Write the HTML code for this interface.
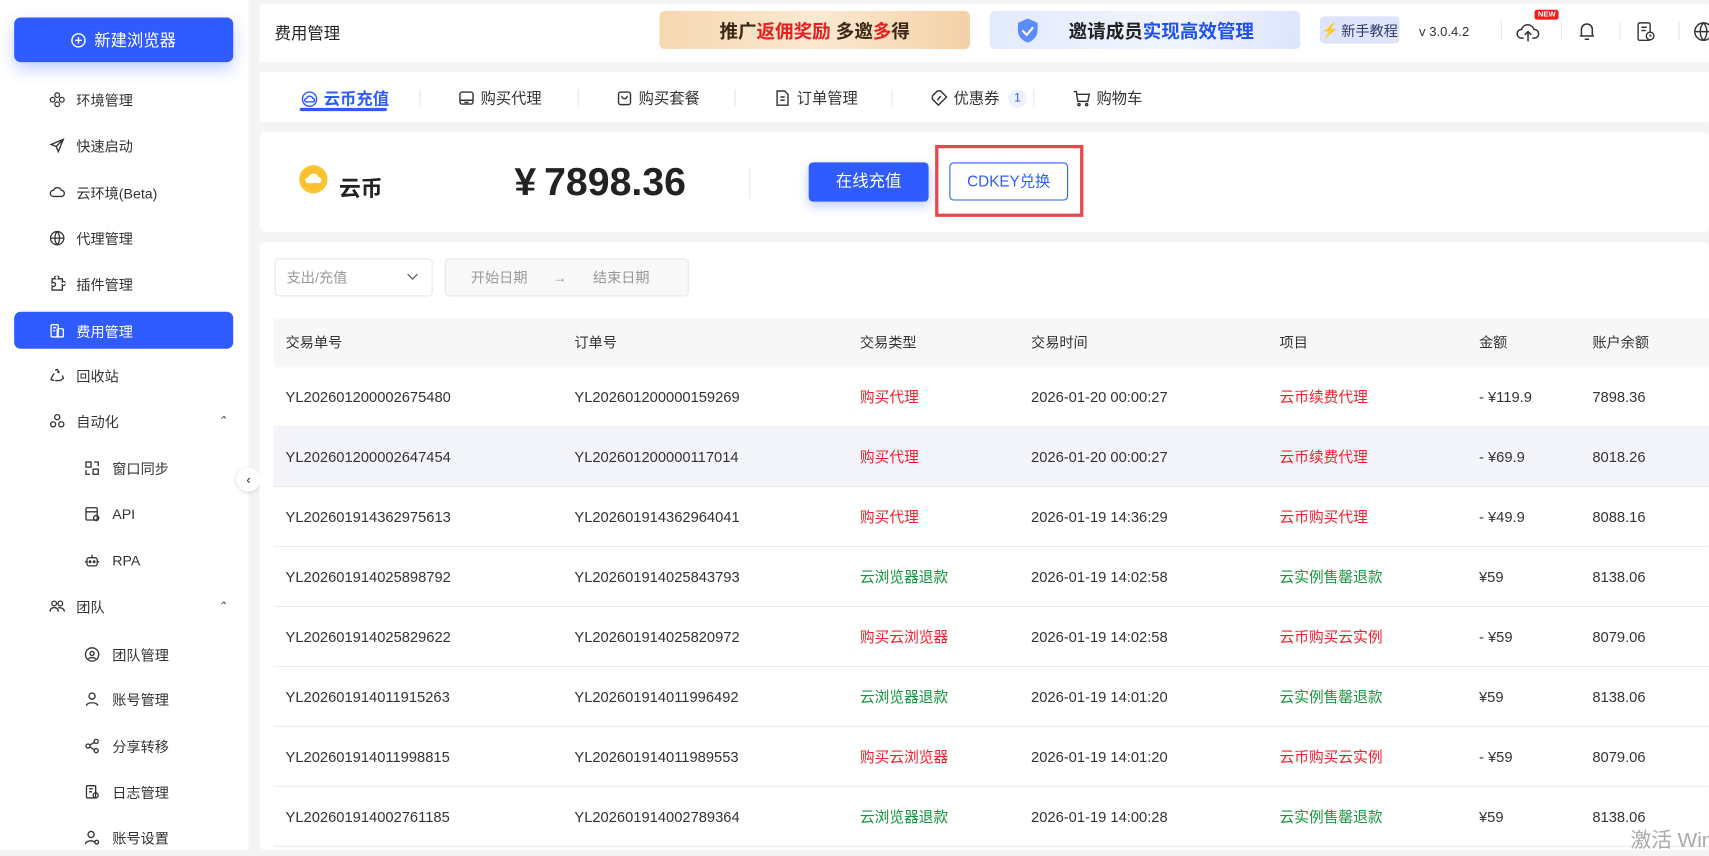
<!DOCTYPE html>
<html><head><meta charset="utf-8">
<style>
*{box-sizing:border-box;margin:0;padding:0}
html,body{width:1709px;height:850px;overflow:hidden;background:#f4f4f5}
body{font-family:"Liberation Sans","Noto Sans CJK SC",sans-serif;color:#333}
#s{position:absolute;left:0;top:0;width:1568px;height:780px;transform:scale(1.0899);transform-origin:0 0;background:#f4f4f5}
.abs{position:absolute}
.side{left:0;top:0;width:228px;height:780px;background:#fff}
.newb{left:13px;top:16px;width:201px;height:41px;background:#2f5bff;border-radius:6px;color:#fff;font-size:15px;display:flex;align-items:center;justify-content:center;box-shadow:0 6px 14px rgba(47,91,255,.3)}
.mi{position:absolute;left:13px;width:201px;height:34px;display:flex;align-items:center;font-size:13px;color:#333;border-radius:6px}
.mi svg{position:absolute;left:32px;width:15px;height:15px}
.mi span{position:absolute;left:57px}
.mi.sub svg{left:64px}
.mi.sub span{left:90px}
.mi.act{background:#2f5bff;color:#fff}
.car{position:absolute;right:6px;font-size:10px;color:#333}
.top{left:238px;top:4px;width:1330px;height:53px;background:#fff}
.tabs{left:238px;top:66px;width:1330px;height:46px;background:#fff}
.tab{position:absolute;top:14px;font-size:14px;color:#333;display:flex;align-items:center;gap:5px}
.sep{position:absolute;top:16px;width:1px;height:16px;background:#e5e5e5}
.card{left:238px;top:121px;width:1330px;height:92px;background:#fff;border-radius:6px}
.tbl{left:238px;top:222px;width:1330px;height:558px;background:#fff;border-radius:6px}
.row{position:absolute;left:251px;width:1317px;height:55px;border-bottom:1px solid #ececec;font-size:13.5px;color:#333}
.row div{position:absolute;top:0;line-height:55px;white-space:nowrap}
.r{color:#f0202a}.g{color:#14953b}
</style></head><body><div id="s">
<div class="abs side"></div>
<div class="abs newb"><svg width="14" height="14" viewBox="0 0 14 14" style="margin-right:7px"><circle cx="7" cy="7" r="6" fill="none" stroke="#fff" stroke-width="1.3"/><path d="M7 4v6M4 7h6" stroke="#fff" stroke-width="1.3"/></svg>新建浏览器</div>

<div class="mi" style="top:74px"><svg viewBox="0 0 16 16" fill="none" stroke="#333" stroke-width="1.2"><circle cx="8" cy="3.5" r="2.3"/><circle cx="8" cy="12.5" r="2.3"/><circle cx="3.5" cy="8" r="2.3"/><circle cx="12.5" cy="8" r="2.3"/></svg><span>环境管理</span></div>
<div class="mi" style="top:116px"><svg viewBox="0 0 16 16" fill="none" stroke="#333" stroke-width="1.3"><path d="M14 2L2 7l5 2 2 5z M7 9l7-7"/></svg><span>快速启动</span></div>
<div class="mi" style="top:159px"><svg viewBox="0 0 16 16" fill="none" stroke="#333" stroke-width="1.3"><path d="M4 12h8a3 3 0 0 0 0-6 4 4 0 0 0-7.5 0A3 3 0 0 0 4 12z"/></svg><span>云环境(Beta)</span></div>
<div class="mi" style="top:201px"><svg viewBox="0 0 16 16" fill="none" stroke="#333" stroke-width="1.3"><circle cx="8" cy="8" r="6.5"/><path d="M1.5 8h13M8 1.5c-3 3-3 10 0 13M8 1.5c3 3 3 10 0 13"/></svg><span>代理管理</span></div>
<div class="mi" style="top:243px"><svg viewBox="0 0 16 16" fill="none" stroke="#333" stroke-width="1.3"><path d="M3 14h10V9a2 2 0 1 0 0-3V3H9a2 2 0 1 0-3 0H3v4a2 2 0 1 1 0 3z"/></svg><span>插件管理</span></div>
<div class="mi act" style="top:286px"><svg viewBox="0 0 16 16" fill="none" stroke="#fff" stroke-width="1.3"><rect x="2" y="2" width="7" height="12" rx="1"/><rect x="8" y="6" width="6" height="8" rx="1"/><path d="M4 5h3M4 8h2"/></svg><span>费用管理</span></div>
<div class="mi" style="top:327px"><svg viewBox="0 0 16 16" fill="none" stroke="#333" stroke-width="1.3"><path d="M6 3l2-1 2 3M13 8l1 3-3 2M3 9l-1 3 3 1M10 5l-2 0M11 13H6M3 9l2-3"/></svg><span>回收站</span></div>
<div class="mi" style="top:369px"><svg viewBox="0 0 16 16" fill="none" stroke="#333" stroke-width="1.3"><circle cx="8" cy="4" r="2.5"/><circle cx="4" cy="11" r="2.5"/><circle cx="12" cy="11" r="2.5"/></svg><span>自动化</span><i class="car">⌃</i></div>
<div class="mi sub" style="top:412px"><svg viewBox="0 0 16 16" fill="none" stroke="#333" stroke-width="1.3"><rect x="2" y="2" width="5" height="5"/><rect x="9" y="9" width="5" height="5"/><path d="M10 2h4v4M2 10v4h4"/></svg><span>窗口同步</span></div>
<div class="mi sub" style="top:454px"><svg viewBox="0 0 16 16" fill="none" stroke="#333" stroke-width="1.3"><rect x="2" y="2" width="11" height="12" rx="1"/><path d="M2 6h11"/><circle cx="12" cy="12" r="2.5"/></svg><span>API</span></div>
<div class="mi sub" style="top:497px"><svg viewBox="0 0 16 16" fill="none" stroke="#333" stroke-width="1.3"><rect x="3" y="5" width="10" height="8" rx="2"/><path d="M8 2v3M1 9h2M13 9h2"/><circle cx="6" cy="9" r=".8"/><circle cx="10" cy="9" r=".8"/></svg><span>RPA</span></div>
<div class="mi" style="top:539px"><svg viewBox="0 0 16 16" fill="none" stroke="#333" stroke-width="1.3"><circle cx="5" cy="5" r="2.3"/><circle cx="11" cy="5" r="2.3"/><path d="M1 13c0-3 2-4 4-4s4 1 4 4M9 9c3 0 6 1 6 4"/></svg><span>团队</span><i class="car">⌃</i></div>
<div class="mi sub" style="top:583px"><svg viewBox="0 0 16 16" fill="none" stroke="#333" stroke-width="1.3"><circle cx="8" cy="8" r="6.5"/><circle cx="8" cy="7" r="2"/><path d="M4.5 12.5c1-2 6-2 7 0"/></svg><span>团队管理</span></div>
<div class="mi sub" style="top:624px"><svg viewBox="0 0 16 16" fill="none" stroke="#333" stroke-width="1.3"><circle cx="8" cy="5" r="3"/><path d="M2.5 14.5c0-4 11-4 11 0"/></svg><span>账号管理</span></div>
<div class="mi sub" style="top:667px"><svg viewBox="0 0 16 16" fill="none" stroke="#333" stroke-width="1.3"><circle cx="4" cy="8" r="2"/><circle cx="12" cy="3.5" r="2"/><circle cx="12" cy="12.5" r="2"/><path d="M6 7l4-2.5M6 9l4 2.5"/></svg><span>分享转移</span></div>
<div class="mi sub" style="top:709px"><svg viewBox="0 0 16 16" fill="none" stroke="#333" stroke-width="1.3"><rect x="2.5" y="2" width="9" height="12" rx="1"/><path d="M5 5h4M5 8h3"/><circle cx="11.5" cy="11.5" r="2.5"/></svg><span>日志管理</span></div>
<div class="mi sub" style="top:751px"><svg viewBox="0 0 16 16" fill="none" stroke="#333" stroke-width="1.3"><circle cx="7" cy="5" r="3"/><path d="M1.5 14.5c0-4 8-4 9-2"/><circle cx="12.5" cy="12.5" r="1.8"/></svg><span>账号设置</span></div>
<div class="abs" style="left:217px;top:429px;width:22px;height:22px;border-radius:50%;background:#fff;box-shadow:0 1px 4px rgba(0,0,0,.15);font-size:12px;line-height:22px;text-align:center;color:#333">‹</div>

<div class="abs top"></div>
<div class="abs" style="left:252px;top:20px;font-size:15px;color:#222">费用管理</div>
<div class="abs" style="left:605px;top:10px;width:285px;height:35px;border-radius:5px;background:linear-gradient(90deg,#f6d7b0,#fbe9d2 50%,#f4d1a6);font-size:17px;font-weight:bold;color:#3b2a1a;display:flex;align-items:center;justify-content:center">推广<span style="color:#e61f1f">返佣奖励</span>&nbsp;多邀<span style="color:#e61f1f">多</span>得</div>
<div class="abs" style="left:908px;top:10px;width:285px;height:35px;border-radius:5px;background:linear-gradient(100deg,#e2eafd,#f1f5ff 60%,#dbe5fc);font-size:17px;font-weight:bold;color:#222;display:flex;align-items:center;justify-content:center;padding-left:30px">邀请成员<span style="color:#2050f0">实现高效管理</span><svg class="abs" style="left:22px;top:6px" width="26" height="24" viewBox="0 0 26 24"><path d="M13 1l9 4v7c0 6-5 10-9 11-4-1-9-5-9-11V5z" fill="#5b8cff"/><path d="M8 12l4 4 6-7" stroke="#fff" stroke-width="2" fill="none"/></svg></div>
<div class="abs" style="left:1211px;top:15px;width:73px;height:25px;border-radius:4px;background:#dde4fb;font-size:13px;color:#2c3a66;display:flex;align-items:center;justify-content:center"><span style="color:#3a6cff;margin-right:2px">⚡</span>新手教程</div>
<div class="abs" style="left:1302px;top:22px;font-size:12px;color:#333">v 3.0.4.2</div>
<div class="abs" style="left:1377px;top:20px;width:1px;height:17px;background:#e5e5e5"></div>
<div class="abs" style="left:1432px;top:20px;width:1px;height:17px;background:#e5e5e5"></div>
<div class="abs" style="left:1486px;top:20px;width:1px;height:17px;background:#e5e5e5"></div>
<div class="abs" style="left:1540px;top:20px;width:1px;height:17px;background:#e5e5e5"></div>
<svg class="abs" style="left:1391px;top:20px" width="22" height="20" viewBox="0 0 22 20" fill="none" stroke="#333" stroke-width="1.4"><path d="M7 15H5a4 4 0 0 1 0-8 6 6 0 0 1 11.5 0A4 4 0 0 1 17 15h-2M11 18v-8M8 12l3-3 3 3"/></svg>
<div class="abs" style="left:1408px;top:9px;background:#f01c1c;color:#fff;font-size:7px;font-weight:bold;padding:1px 3px;border-radius:2px">NEW</div>
<svg class="abs" style="left:1447px;top:19px" width="18" height="20" viewBox="0 0 18 20" fill="none" stroke="#333" stroke-width="1.4"><path d="M4 14V8a5 5 0 0 1 10 0v6h1.5H2.5zM7 17h4"/></svg>
<svg class="abs" style="left:1500px;top:19px" width="20" height="20" viewBox="0 0 20 20" fill="none" stroke="#333" stroke-width="1.3"><rect x="3" y="2" width="11" height="16" rx="1.5"/><path d="M6 6h5M6 9h4"/><circle cx="14" cy="14" r="3.5" fill="#fff"/><path d="M14 12.5v1.5h1.2"/></svg>
<svg class="abs" style="left:1553px;top:19px" width="20" height="20" viewBox="0 0 20 20" fill="none" stroke="#333" stroke-width="1.3"><circle cx="10" cy="10" r="8"/><path d="M2 10h16M10 2c-4 4-4 12 0 16M10 2c4 4 4 12 0 16"/></svg>

<div class="abs tabs">
<div class="tab" style="left:38px;color:#2f5bff;font-weight:bold;font-size:15px"><svg width="16" height="16" viewBox="0 0 16 16" fill="none" stroke="#2f5bff" stroke-width="1.3"><circle cx="8" cy="8" r="6.5"/><path d="M5 10.5h6a1.6 1.6 0 0 0 0-3.2 3 3 0 0 0-5.7 0A1.6 1.6 0 0 0 5 10.5z"/></svg>云币充值</div>
<div class="abs" style="left:37px;top:33px;width:80px;height:3px;background:#2f5bff;border-radius:2px"></div>
<div class="sep" style="left:147px"></div>
<div class="tab" style="left:182px"><svg width="16" height="16" viewBox="0 0 16 16" fill="none" stroke="#333" stroke-width="1.3"><rect x="2" y="2.5" width="12" height="11" rx="2"/><path d="M2 10h12M6 12h4"/></svg>购买代理</div>
<div class="sep" style="left:292px"></div>
<div class="tab" style="left:327px"><svg width="16" height="16" viewBox="0 0 16 16" fill="none" stroke="#333" stroke-width="1.3"><rect x="2.5" y="2.5" width="11" height="11.5" rx="2"/><path d="M5.5 6a2.5 2.5 0 0 0 5 0"/></svg>购买套餐</div>
<div class="sep" style="left:436px"></div>
<div class="tab" style="left:472px"><svg width="16" height="16" viewBox="0 0 16 16" fill="none" stroke="#333" stroke-width="1.3"><path d="M3 1.5h7l3 3v10H3z"/><path d="M6 7h4M6 10h4"/></svg>订单管理</div>
<div class="sep" style="left:580px"></div>
<div class="tab" style="left:616px"><svg width="16" height="16" viewBox="0 0 16 16" fill="none" stroke="#333" stroke-width="1.3"><path d="M9 1.5L14.5 7 7 14.5 1.5 9V6l4.5-4.5z"/><path d="M6 10l3-4"/></svg>优惠券<span style="display:inline-block;width:17px;height:17px;border-radius:50%;background:#eef2ff;color:#2f5bff;font-size:11px;text-align:center;line-height:17px;margin-left:3px">1</span></div>
<div class="sep" style="left:710px"></div>
<div class="tab" style="left:746px"><svg width="17" height="16" viewBox="0 0 17 16" fill="none" stroke="#333" stroke-width="1.3"><path d="M1 2h2.5l1.5 9h9l1.5-6.5H4"/><circle cx="6" cy="14" r="1"/><circle cx="13" cy="14" r="1"/></svg>购物车</div>
</div>

<div class="abs card"></div>
<svg class="abs" style="left:274px;top:151px" width="27" height="27" viewBox="0 0 27 27"><circle cx="13.5" cy="13.5" r="13" fill="#f9c531"/><circle cx="13.5" cy="13.5" r="10.5" fill="#fbc02d"/><path d="M8.5 17h10a2.6 2.6 0 0 0 0-5.2 5 5 0 0 0-9.6 0A2.6 2.6 0 0 0 8.5 17z" fill="#fff"/></svg>
<div class="abs" style="left:311px;top:157px;font-size:20px;font-weight:bold;color:#222">云币</div>
<div class="abs" style="left:472px;top:146px;font-size:36px;font-weight:bold;color:#222;white-space:nowrap">¥&#8201;7898.36</div>
<div class="abs" style="left:687px;top:154px;width:1px;height:28px;background:#e8e8e8"></div>
<div class="abs" style="left:742px;top:149px;width:110px;height:36px;background:#2f5bff;border-radius:4px;color:#fff;font-size:15px;text-align:center;line-height:36px;box-shadow:0 4px 10px rgba(47,91,255,.3)">在线充值</div>
<div class="abs" style="left:871px;top:149px;width:109px;height:35px;border:1px solid #2f5bff;border-radius:4px;color:#2f5bff;font-size:14px;text-align:center;line-height:33px">CDKEY兑换</div>
<div class="abs" style="left:858px;top:133px;width:136px;height:66px;border:3px solid #e8474b"></div>

<div class="abs tbl"></div>
<div class="abs" style="left:252px;top:237px;width:145px;height:35px;border:1px solid #e6e7eb;border-radius:4px;font-size:13px;color:#999;line-height:33px;padding-left:10px">支出/充值<svg class="abs" style="right:12px;top:12px" width="11" height="8" viewBox="0 0 11 8"><path d="M1 1.5l4.5 4.5 4.5-4.5" stroke="#666" stroke-width="1.2" fill="none"/></svg></div>
<div class="abs" style="left:408px;top:237px;width:224px;height:35px;border:1px solid #e6e7eb;border-radius:4px;background:#f8f8f9;font-size:13px;color:#999;line-height:33px"><span class="abs" style="left:23px">开始日期</span><span class="abs" style="left:98px">→</span><span class="abs" style="left:135px">结束日期</span></div>

<div class="row" style="top:292px;height:45px;background:#f7f7f8;border:none;font-size:13px"><div style="left:11px;line-height:45px">交易单号</div><div style="left:276px;line-height:45px">订单号</div><div style="left:538px;line-height:45px">交易类型</div><div style="left:695px;line-height:45px">交易时间</div><div style="left:923px;line-height:45px">项目</div><div style="left:1106px;line-height:45px">金额</div><div style="left:1210px;line-height:45px">账户余额</div></div>

<div class="row" style="top:337px"><div style="left:11px">YL202601200002675480</div><div style="left:276px">YL202601200000159269</div><div style="left:538px" class="r">购买代理</div><div style="left:695px">2026-01-20 00:00:27</div><div style="left:923px" class="r">云币续费代理</div><div style="left:1106px">- ¥119.9</div><div style="left:1210px">7898.36</div></div>
<div class="row" style="top:392px;background:#f3f5fa"><div style="left:11px">YL202601200002647454</div><div style="left:276px">YL202601200000117014</div><div style="left:538px" class="r">购买代理</div><div style="left:695px">2026-01-20 00:00:27</div><div style="left:923px" class="r">云币续费代理</div><div style="left:1106px">- ¥69.9</div><div style="left:1210px">8018.26</div></div>
<div class="row" style="top:447px"><div style="left:11px">YL202601914362975613</div><div style="left:276px">YL202601914362964041</div><div style="left:538px" class="r">购买代理</div><div style="left:695px">2026-01-19 14:36:29</div><div style="left:923px" class="r">云币购买代理</div><div style="left:1106px">- ¥49.9</div><div style="left:1210px">8088.16</div></div>
<div class="row" style="top:502px"><div style="left:11px">YL202601914025898792</div><div style="left:276px">YL202601914025843793</div><div style="left:538px" class="g">云浏览器退款</div><div style="left:695px">2026-01-19 14:02:58</div><div style="left:923px" class="g">云实例售罄退款</div><div style="left:1106px">¥59</div><div style="left:1210px">8138.06</div></div>
<div class="row" style="top:557px"><div style="left:11px">YL202601914025829622</div><div style="left:276px">YL202601914025820972</div><div style="left:538px" class="r">购买云浏览器</div><div style="left:695px">2026-01-19 14:02:58</div><div style="left:923px" class="r">云币购买云实例</div><div style="left:1106px">- ¥59</div><div style="left:1210px">8079.06</div></div>
<div class="row" style="top:612px"><div style="left:11px">YL202601914011915263</div><div style="left:276px">YL202601914011996492</div><div style="left:538px" class="g">云浏览器退款</div><div style="left:695px">2026-01-19 14:01:20</div><div style="left:923px" class="g">云实例售罄退款</div><div style="left:1106px">¥59</div><div style="left:1210px">8138.06</div></div>
<div class="row" style="top:667px"><div style="left:11px">YL202601914011998815</div><div style="left:276px">YL202601914011989553</div><div style="left:538px" class="r">购买云浏览器</div><div style="left:695px">2026-01-19 14:01:20</div><div style="left:923px" class="r">云币购买云实例</div><div style="left:1106px">- ¥59</div><div style="left:1210px">8079.06</div></div>
<div class="row" style="top:722px"><div style="left:11px">YL202601914002761185</div><div style="left:276px">YL202601914002789364</div><div style="left:538px" class="g">云浏览器退款</div><div style="left:695px">2026-01-19 14:00:28</div><div style="left:923px" class="g">云实例售罄退款</div><div style="left:1106px">¥59</div><div style="left:1210px">8138.06</div></div>

<div class="abs" style="left:1496px;top:756px;font-size:19px;color:#aaa;white-space:nowrap">激活 Win</div>
</div></body></html>
